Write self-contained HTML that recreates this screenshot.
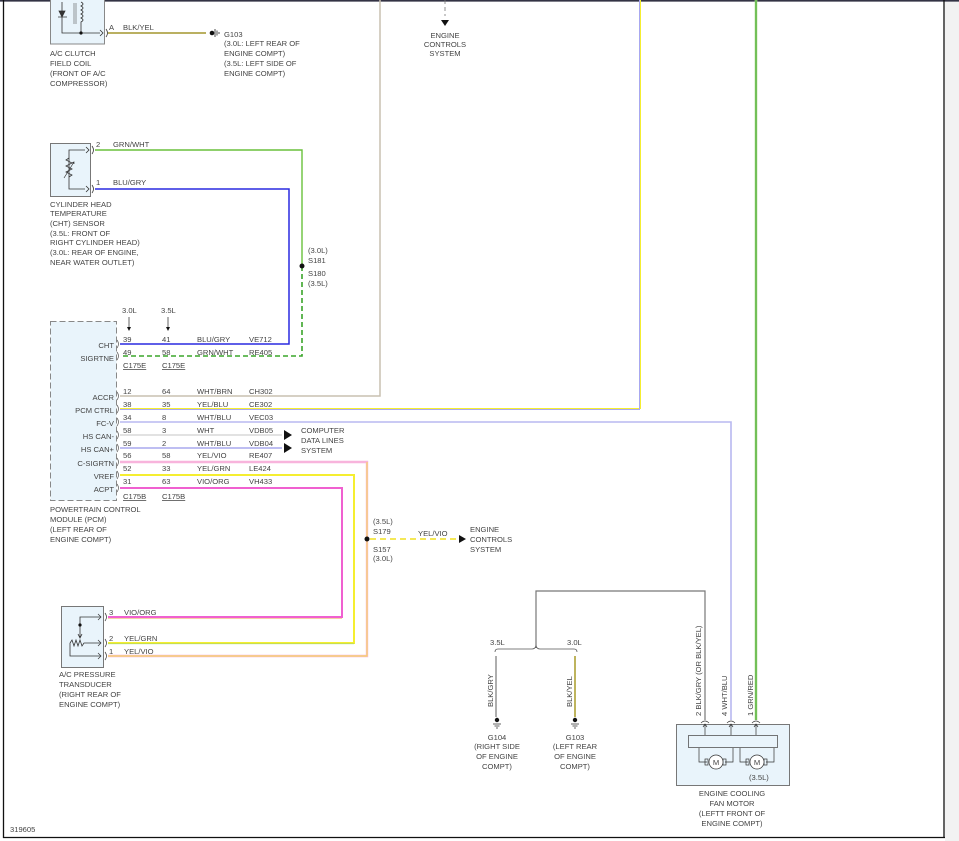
<!DOCTYPE html>
<html><head><meta charset="utf-8"><style>
html,body{margin:0;padding:0;background:#fff;}
svg{display:block;}
text{font-family:"Liberation Sans",Arial,sans-serif;font-size:7.6px;fill:#444;}
</style></head><body>
<svg width="959" height="841" viewBox="0 0 959 841" xmlns="http://www.w3.org/2000/svg">
<rect x="0" y="0" width="959" height="841" fill="#fff"/>
<rect x="945" y="0" width="14" height="841" fill="#f2f2f2"/>
<line x1="0" y1="0.8" x2="959" y2="0.8" stroke="#334" stroke-width="1.6"/>
<line x1="3.5" y1="0" x2="3.5" y2="838" stroke="#111" stroke-width="1.3"/>
<line x1="944" y1="0" x2="944" y2="838" stroke="#111" stroke-width="1.3"/>
<line x1="3" y1="837.5" x2="945" y2="837.5" stroke="#111" stroke-width="1.3"/>

<!-- A/C clutch -->
<rect x="50.5" y="-2" width="54" height="46" fill="#e9f4fb" stroke="#888"/>
<path d="M62 2 V33 H100" fill="none" stroke="#333" stroke-width="0.8"/>
<path d="M58 17 H67 M59 11 L62 17 L65 11 Z" fill="#333" stroke="#333" stroke-width="0.8"/>
<path d="M74 3 V24 M76 3 V24" stroke="#555" stroke-width="0.6"/>
<path d="M81 2 q4 2 0 4 q4 2 0 4 q4 2 0 4 q4 2 0 4 q4 2 0 4 V33" fill="none" stroke="#333" stroke-width="0.8"/>
<circle cx="81" cy="33" r="1.6" fill="#111"/>
<path d="M100 30 l3 3 l-3 3 M106 29 q3 4 0 8" fill="none" stroke="#333" stroke-width="0.8"/>
<text x="109" y="30">A</text>
<text x="123" y="30">BLK/YEL</text>
<line x1="108" y1="33" x2="206" y2="33" stroke="#d8c84a" stroke-width="2"/>
<line x1="108" y1="33" x2="206" y2="33" stroke="#888" stroke-width="0.8"/>
<circle cx="212" cy="33" r="2.3" fill="#111"/>
<path d="M215 29 V37 M217 30.5 V35.5 M219 32 V34" stroke="#222" stroke-width="0.8"/>
<text x="224" y="37">G103</text>
<text x="224" y="46">(3.0L: LEFT REAR OF</text>
<text x="224" y="56">ENGINE COMPT)</text>
<text x="224" y="66">(3.5L: LEFT SIDE OF</text>
<text x="224" y="76">ENGINE COMPT)</text>
<text x="50" y="56">A/C CLUTCH</text>
<text x="50" y="66">FIELD COIL</text>
<text x="50" y="76">(FRONT OF A/C</text>
<text x="50" y="86">COMPRESSOR)</text>

<!-- Engine controls top -->
<line x1="445" y1="0" x2="445" y2="16" stroke="#777" stroke-width="0.8" stroke-dasharray="4,3"/>
<path d="M441 20 h8 l-4 6 z" fill="#111"/>
<text x="445" y="38" text-anchor="middle">ENGINE</text>
<text x="445" y="47" text-anchor="middle">CONTROLS</text>
<text x="445" y="56" text-anchor="middle">SYSTEM</text>

<!-- CHT sensor -->
<rect x="50.5" y="143.5" width="40" height="53" fill="#e9f4fb" stroke="#777"/>
<path d="M85 150 H69 V189 H85" fill="none" stroke="#333" stroke-width="0.8"/>
<path d="M69 158 l-3 2 l6 3 l-6 3 l6 3 l-6 3 l6 3 l-3 2" fill="none" stroke="#333" stroke-width="0.8"/>
<path d="M64 178 L74 162 M72 163 l2-1 l0 2" fill="none" stroke="#333" stroke-width="0.7"/>
<path d="M86 147 l3 3 l-3 3 M92 146 q3 4 0 8 M86 186 l3 3 l-3 3 M92 185 q3 4 0 8" fill="none" stroke="#333" stroke-width="0.8"/>
<text x="96" y="147">2</text><text x="113" y="147">GRN/WHT</text>
<text x="96" y="185">1</text><text x="113" y="185">BLU/GRY</text>
<text x="50" y="207">CYLINDER HEAD</text>
<text x="50" y="216">TEMPERATURE</text>
<text x="50" y="226">(CHT) SENSOR</text>
<text x="50" y="236">(3.5L: FRONT OF</text>
<text x="50" y="245">RIGHT CYLINDER HEAD)</text>
<text x="50" y="255">(3.0L: REAR OF ENGINE,</text>
<text x="50" y="265">NEAR WATER OUTLET)</text>

<path d="M95 150 H302 V266" fill="none" stroke="#6ac13c" stroke-width="1.4"/>
<path d="M302 266 V356 H120" fill="none" stroke="#3aa52a" stroke-width="1.6" stroke-dasharray="5,3"/>
<path d="M95 189 H289 V344 H120" fill="none" stroke="#2a2ae0" stroke-width="1.5"/>
<circle cx="302" cy="266" r="2.5" fill="#111"/>
<text x="308" y="253">(3.0L)</text><text x="308" y="263">S181</text>
<text x="308" y="276">S180</text><text x="308" y="286">(3.5L)</text>

<!-- long verticals -->
<path d="M120 396 H380 V0" fill="none" stroke="#c9c0b0" stroke-width="1.5"/>
<path d="M120 408.5 H640.5 V0" fill="none" stroke="#f5ee30" stroke-width="1"/>
<path d="M120 409.5 H639.5 V0" fill="none" stroke="#a8a8f0" stroke-width="1"/>
<path d="M120 422 H731 V720" fill="none" stroke="#b8b8f0" stroke-width="1.6"/>
<line x1="756" y1="0" x2="756" y2="720" stroke="#b0dd90" stroke-width="2.6"/>
<line x1="756" y1="0" x2="756" y2="720" stroke="#3fa82a" stroke-width="1.1"/>
<line x1="120" y1="435" x2="282" y2="435" stroke="#d8d8d8" stroke-width="1.6"/>
<line x1="120" y1="448" x2="282" y2="448" stroke="#a8a8ee" stroke-width="1.6"/>
<path d="M284 430 l8 5 l-8 5 z M284 443 l8 5 l-8 5 z" fill="#111"/>
<text x="301" y="433">COMPUTER</text>
<text x="301" y="443">DATA LINES</text>
<text x="301" y="453">SYSTEM</text>

<path d="M120 462 H367 V656 H108" fill="none" stroke="#f8b4dc" stroke-width="2.4"/>
<path d="M367 462 V656 H108" fill="none" stroke="#f5e040" stroke-width="0.9"/>
<path d="M120 475 H354 V643 H108" fill="none" stroke="#f5ee30" stroke-width="2"/>
<line x1="108" y1="643.8" x2="354" y2="643.8" stroke="#9ad06a" stroke-width="0.7"/>
<path d="M120 488 H342 V617 H108" fill="none" stroke="#f060d0" stroke-width="2"/>
<line x1="108" y1="618.3" x2="342" y2="618.3" stroke="#f0b070" stroke-width="0.7"/>
<circle cx="367" cy="539" r="2.5" fill="#111"/>
<line x1="370" y1="539" x2="458" y2="539" stroke="#f0e020" stroke-width="1.6" stroke-dasharray="6,4"/>
<path d="M459 535 l7 4 l-7 4 z" fill="#111"/>
<text x="373" y="524">(3.5L)</text><text x="373" y="534">S179</text>
<text x="373" y="552">S157</text><text x="373" y="561">(3.0L)</text>
<text x="418" y="536">YEL/VIO</text>
<text x="470" y="532">ENGINE</text><text x="470" y="542">CONTROLS</text><text x="470" y="552">SYSTEM</text>

<!-- PCM -->
<rect x="50.5" y="321.5" width="66" height="179" fill="#e9f4fb" stroke="#888" stroke-dasharray="6,3"/>
<g text-anchor="end">
<text x="114" y="348">CHT</text><text x="114" y="361">SIGRTNE</text>
<text x="114" y="400">ACCR</text><text x="114" y="413">PCM CTRL</text><text x="114" y="426">FC-V</text>
<text x="114" y="439">HS CAN-</text><text x="114" y="452">HS CAN+</text><text x="114" y="466">C-SIGRTN</text>
<text x="114" y="479">VREF</text><text x="114" y="492">ACPT</text>
</g>
<g fill="none" stroke="#555" stroke-width="0.7">
<path d="M117 340 q3 4 0 8 M117 352 q3 4 0 8 M117 392 q3 4 0 8 M117 405 q3 4 0 8 M117 418 q3 4 0 8 M117 431 q3 4 0 8 M117 444 q3 4 0 8 M117 458 q3 4 0 8 M117 471 q3 4 0 8 M117 484 q3 4 0 8"/>
</g>
<text x="122" y="313">3.0L</text><text x="161" y="313">3.5L</text>
<path d="M129 317 V328 M168 317 V328" stroke="#222" stroke-width="0.7"/>
<path d="M127 327 l2 4 l2 -4 z M166 327 l2 4 l2 -4 z" fill="#111"/>
<g>
<text x="123" y="342">39</text><text x="162" y="342">41</text><text x="197" y="342">BLU/GRY</text><text x="249" y="342">VE712</text>
<text x="123" y="355">49</text><text x="162" y="355">58</text><text x="197" y="355">GRN/WHT</text><text x="249" y="355">RE405</text>
<text x="123" y="368" text-decoration="underline">C175E</text><text x="162" y="368" text-decoration="underline">C175E</text>
<text x="123" y="394">12</text><text x="162" y="394">64</text><text x="197" y="394">WHT/BRN</text><text x="249" y="394">CH302</text>
<text x="123" y="407">38</text><text x="162" y="407">35</text><text x="197" y="407">YEL/BLU</text><text x="249" y="407">CE302</text>
<text x="123" y="420">34</text><text x="162" y="420">8</text><text x="197" y="420">WHT/BLU</text><text x="249" y="420">VEC03</text>
<text x="123" y="433">58</text><text x="162" y="433">3</text><text x="197" y="433">WHT</text><text x="249" y="433">VDB05</text>
<text x="123" y="446">59</text><text x="162" y="446">2</text><text x="197" y="446">WHT/BLU</text><text x="249" y="446">VDB04</text>
<text x="123" y="458">56</text><text x="162" y="458">58</text><text x="197" y="458">YEL/VIO</text><text x="249" y="458">RE407</text>
<text x="123" y="471">52</text><text x="162" y="471">33</text><text x="197" y="471">YEL/GRN</text><text x="249" y="471">LE424</text>
<text x="123" y="484">31</text><text x="162" y="484">63</text><text x="197" y="484">VIO/ORG</text><text x="249" y="484">VH433</text>
<text x="123" y="499" text-decoration="underline">C175B</text><text x="162" y="499" text-decoration="underline">C175B</text>
</g>
<text x="50" y="512">POWERTRAIN CONTROL</text>
<text x="50" y="522">MODULE (PCM)</text>
<text x="50" y="532">(LEFT REAR OF</text>
<text x="50" y="542">ENGINE COMPT)</text>

<!-- AC pressure transducer -->
<rect x="61.5" y="606.5" width="42" height="61" fill="#e9f4fb" stroke="#777"/>
<path d="M101 617 H80 V637 M78 634 l2 4 l2 -4 M70 643 l2-3 l2 6 l2-6 l2 6 l2-6 l2 6 l2-3 H101 M70 643 V656 H101" fill="none" stroke="#333" stroke-width="0.8"/>
<circle cx="80" cy="625" r="1.6" fill="#111"/>
<path d="M98 614 l3 3 l-3 3 M98 640 l3 3 l-3 3 M98 653 l3 3 l-3 3 M105 613 q3 4 0 8 M105 639 q3 4 0 8 M105 652 q3 4 0 8" fill="none" stroke="#333" stroke-width="0.7"/>
<text x="109" y="615">3</text><text x="124" y="615">VIO/ORG</text>
<text x="109" y="641">2</text><text x="124" y="641">YEL/GRN</text>
<text x="109" y="654">1</text><text x="124" y="654">YEL/VIO</text>
<text x="59" y="677">A/C PRESSURE</text><text x="59" y="687">TRANSDUCER</text>
<text x="59" y="697">(RIGHT REAR OF</text><text x="59" y="707">ENGINE COMPT)</text>

<!-- grounds -->
<path d="M536 648 V591 H705 V720" fill="none" stroke="#777" stroke-width="1.2"/>
<path d="M495 652 q0 -3 3 -3 H532 q3 0 4 -3 q1 3 4 3 H574 q3 0 3 3" fill="none" stroke="#555" stroke-width="0.8"/>
<text x="490" y="645">3.5L</text><text x="567" y="645">3.0L</text>
<line x1="496" y1="656" x2="496" y2="717" stroke="#777" stroke-width="1.2"/>
<line x1="575" y1="656" x2="575" y2="717" stroke="#e0d040" stroke-width="1.8"/>
<line x1="575" y1="656" x2="575" y2="717" stroke="#666" stroke-width="0.6"/>
<text transform="translate(493,707) rotate(-90)">BLK/GRY</text>
<text transform="translate(572,707) rotate(-90)">BLK/YEL</text>
<circle cx="497" cy="720" r="2.2" fill="#111"/><circle cx="575" cy="720" r="2.2" fill="#111"/>
<path d="M493 724 h8 M494.5 726 h5 M496 728 h2 M571 724 h8 M572.5 726 h5 M574 728 h2" stroke="#333" stroke-width="0.7"/>
<g text-anchor="middle">
<text x="497" y="740">G104</text><text x="497" y="749">(RIGHT SIDE</text><text x="497" y="759">OF ENGINE</text><text x="497" y="769">COMPT)</text>
<text x="575" y="740">G103</text><text x="575" y="749">(LEFT REAR</text><text x="575" y="759">OF ENGINE</text><text x="575" y="769">COMPT)</text>
</g>

<!-- fan motor -->
<text transform="translate(701,716) rotate(-90)">2   BLK/GRY    (OR BLK/YEL)</text>
<text transform="translate(727,716) rotate(-90)">4   WHT/BLU</text>
<text transform="translate(753,716) rotate(-90)">1   GRN/RED</text>
<rect x="676.5" y="724.5" width="113" height="61" fill="#e9f4fb" stroke="#777"/>
<rect x="688.5" y="735.5" width="89" height="12" fill="#e9f4fb" stroke="#555" stroke-width="0.8"/>
<g fill="none" stroke="#333" stroke-width="0.7">
<path d="M701 723 q4 -4 8 0 M727 723 q4 -4 8 0 M752 723 q4 -4 8 0"/>
<path d="M705 735 V724 M731 735 V724 M756 735 V724 M703 727 l2 -3 l2 3 M729 727 l2 -3 l2 3 M754 727 l2 -3 l2 3"/>
<path d="M699 748 V762 H707 M733 748 V762 H725 M740 748 V762 H748 M774 748 V762 H766"/>
<rect x="705" y="759" width="3" height="6"/><rect x="723" y="759" width="3" height="6"/>
<rect x="746" y="759" width="3" height="6"/><rect x="764" y="759" width="3" height="6"/>
<circle cx="716" cy="762" r="7" fill="#fff"/><circle cx="757" cy="762" r="7" fill="#fff"/>
</g>
<text x="716" y="765" text-anchor="middle" font-size="8">M</text>
<text x="757" y="765" text-anchor="middle" font-size="8">M</text>
<text x="749" y="780">(3.5L)</text>
<g text-anchor="middle">
<text x="732" y="796">ENGINE COOLING</text><text x="732" y="806">FAN MOTOR</text>
<text x="732" y="816">(LEFTT FRONT OF</text><text x="732" y="826">ENGINE COMPT)</text>
</g>
<text x="10" y="832" font-size="7">319605</text>
</svg>
</body></html>
